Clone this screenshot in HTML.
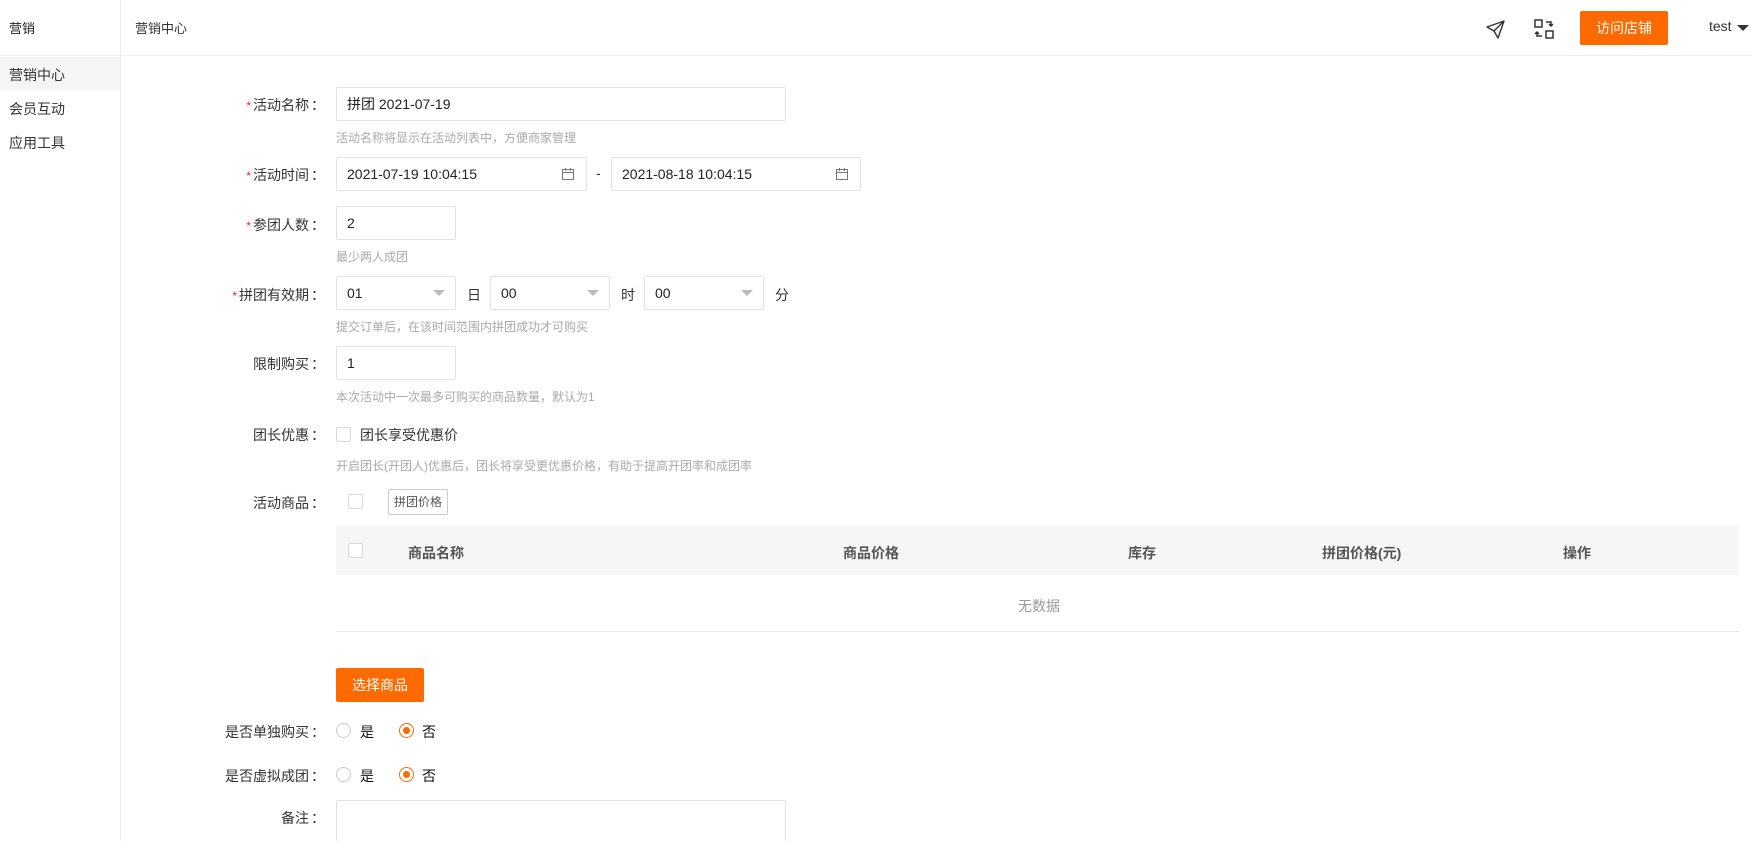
<!DOCTYPE html>
<html><head><meta charset="utf-8"><style>
*{box-sizing:border-box;margin:0;padding:0}
html{width:1751px;height:841px;overflow:hidden}
body{width:1751px;height:841px;overflow:hidden;background:#fff;font-family:"Liberation Sans","Noto Sans CJK SC",sans-serif;font-size:14px;color:#333;position:relative}
.a{position:absolute;white-space:nowrap}
.inp{position:absolute;border:1px solid #e3e3e3;border-radius:2px;background:#fff;padding-left:10px;display:flex;align-items:center;color:#222}
.lbl{position:absolute;right:1426px;white-space:nowrap;color:#333}
.lbl b{font-weight:normal;display:inline-block;width:14px;text-align:center;margin-left:2px}
.lbl i{color:#f5222d;font-style:normal;font-size:12px;margin-right:2px}
.help{position:absolute;left:336px;font-size:12px;color:#aaa;white-space:nowrap}
.tri{position:absolute;right:10px;top:13px;width:0;height:0;border-left:6px solid transparent;border-right:6px solid transparent;border-top:6px solid #bbb}
.cb{position:absolute;width:15px;height:15px;border:1px solid #d9d9d9;border-radius:2px;background:#fff}
.rd{position:absolute;width:15px;height:15px;border:1px solid #ccc;border-radius:50%}
.rd.on{border-color:#ff6a00}
.rd.on:after{content:"";position:absolute;left:3px;top:3px;width:7px;height:7px;border-radius:50%;background:#ff6a00}
.th{position:absolute;top:543px;font-weight:bold;color:#555}
</style></head><body>
<div class="a" style="left:0;top:0;width:1751px;height:56px;border-bottom:1px solid #eee"></div>
<div class="a" style="left:120px;top:0;width:1px;height:841px;background:#eee"></div>
<div class="a" style="left:9px;top:18px;font-size:13px;color:#222">营销</div>
<div class="a" style="left:135px;top:18px;font-size:13px;color:#333">营销中心</div>
<div class="a" style="left:0;top:57px;width:120px;height:34px;background:#f5f5f5"></div>
<div class="a" style="left:9px;top:65px;font-size:14px">营销中心</div>
<div class="a" style="left:9px;top:99px;font-size:14px">会员互动</div>
<div class="a" style="left:9px;top:133px;font-size:14px">应用工具</div>
<svg class="a" style="left:1486px;top:20px" width="19" height="19" viewBox="0 0 19 19" fill="none" stroke="#333" stroke-width="1.4" stroke-linejoin="round"><path d="M1 7 L18 1 L12 18 L8 11 Z M8 11 L18 1"/></svg>
<svg class="a" style="left:1534px;top:19px" width="20" height="20" viewBox="0 0 20 20" fill="none" stroke="#333" stroke-width="1.5"><rect x="1" y="1" width="7" height="7"/><rect x="12" y="12" width="7" height="7"/><path d="M12 3 h5 v4 M15 5 l2 2 l2-2 M8 17 h-5 v-4 M5 15 l-2-2 l-2 2"/></svg>
<div class="a" style="left:1580px;top:11px;width:88px;height:34px;background:#ff6a00;border-radius:2px;color:#fff;font-size:14px;line-height:34px;text-align:center">访问店铺</div>
<div class="a" style="left:1709px;top:18px;font-size:14px;color:#333">test</div>
<div class="a" style="left:1737px;top:25px;border-left:6px solid transparent;border-right:6px solid transparent;border-top:6px solid #333"></div>

<div class="lbl" style="top:95px"><i>*</i>活动名称<b>：</b></div>
<div class="inp" style="left:336px;top:87px;width:450px;height:34px">拼团 2021-07-19</div>
<div class="help" style="top:129px">活动名称将显示在活动列表中，方便商家管理</div>

<div class="lbl" style="top:165px"><i>*</i>活动时间<b>：</b></div>
<div class="inp" style="left:336px;top:157px;width:251px;height:34px">2021-07-19 10:04:15</div>
<div class="a" style="left:596px;top:165px">-</div>
<div class="inp" style="left:611px;top:157px;width:250px;height:34px">2021-08-18 10:04:15</div>
<svg class="a" style="left:561px;top:167px" width="14" height="14" viewBox="0 0 14 14" fill="none" stroke="#777"><rect x="1.5" y="2.5" width="11" height="10"/><path d="M1.5 5.5h11M4.5 1v3M9.5 1v3"/></svg>
<svg class="a" style="left:835px;top:167px" width="14" height="14" viewBox="0 0 14 14" fill="none" stroke="#777"><rect x="1.5" y="2.5" width="11" height="10"/><path d="M1.5 5.5h11M4.5 1v3M9.5 1v3"/></svg>

<div class="lbl" style="top:215px"><i>*</i>参团人数<b>：</b></div>
<div class="inp" style="left:336px;top:206px;width:120px;height:34px">2</div>
<div class="help" style="top:248px">最少两人成团</div>

<div class="lbl" style="top:285px"><i>*</i>拼团有效期<b>：</b></div>
<div class="inp" style="left:336px;top:276px;width:120px;height:34px">01<span class="tri"></span></div>
<div class="a" style="left:467px;top:285px">日</div>
<div class="inp" style="left:490px;top:276px;width:120px;height:34px">00<span class="tri"></span></div>
<div class="a" style="left:621px;top:285px">时</div>
<div class="inp" style="left:644px;top:276px;width:120px;height:34px">00<span class="tri"></span></div>
<div class="a" style="left:775px;top:285px">分</div>
<div class="help" style="top:318px">提交订单后，在该时间范围内拼团成功才可购买</div>

<div class="lbl" style="top:354px">限制购买<b>：</b></div>
<div class="inp" style="left:336px;top:346px;width:120px;height:34px">1</div>
<div class="help" style="top:388px">本次活动中一次最多可购买的商品数量，默认为1</div>

<div class="lbl" style="top:425px">团长优惠<b>：</b></div>
<div class="cb" style="left:336px;top:427px"></div>
<div class="a" style="left:360px;top:425px">团长享受优惠价</div>
<div class="help" style="top:457px">开启团长(开团人)优惠后，团长将享受更优惠价格，有助于提高开团率和成团率</div>

<div class="lbl" style="top:493px">活动商品<b>：</b></div>
<div class="cb" style="left:348px;top:494px"></div>
<div class="a" style="left:388px;top:489px;width:60px;height:26px;border:1px solid #ccc;border-radius:2px;font-size:12px;line-height:24px;text-align:center;color:#555">拼团价格</div>

<div class="a" style="left:336px;top:526px;width:1403px;height:49px;background:#f6f6f6"></div>
<div class="cb" style="left:348px;top:543px"></div>
<div class="th" style="left:408px">商品名称</div>
<div class="th" style="left:843px">商品价格</div>
<div class="th" style="left:1128px">库存</div>
<div class="th" style="left:1322px">拼团价格(元)</div>
<div class="th" style="left:1563px">操作</div>
<div class="a" style="left:1018px;top:596px;color:#999">无数据</div>
<div class="a" style="left:336px;top:631px;width:1403px;height:1px;background:#e8e8e8"></div>

<div class="a" style="left:336px;top:668px;width:88px;height:34px;background:#ff6a00;border-radius:2px;color:#fff;line-height:34px;text-align:center">选择商品</div>

<div class="lbl" style="top:722px">是否单独购买<b>：</b></div>
<div class="rd" style="left:336px;top:723px"></div><div class="a" style="left:360px;top:722px;color:#111">是</div>
<div class="rd on" style="left:399px;top:723px"></div><div class="a" style="left:422px;top:722px;color:#111">否</div>

<div class="lbl" style="top:766px">是否虚拟成团<b>：</b></div>
<div class="rd" style="left:336px;top:767px"></div><div class="a" style="left:360px;top:766px;color:#111">是</div>
<div class="rd on" style="left:399px;top:767px"></div><div class="a" style="left:422px;top:766px;color:#111">否</div>

<div class="lbl" style="top:808px">备注<b>：</b></div>
<div class="a" style="left:336px;top:800px;width:450px;height:41px;border:1px solid #e3e3e3;border-bottom:none;border-radius:2px 2px 0 0"></div>
</body></html>
